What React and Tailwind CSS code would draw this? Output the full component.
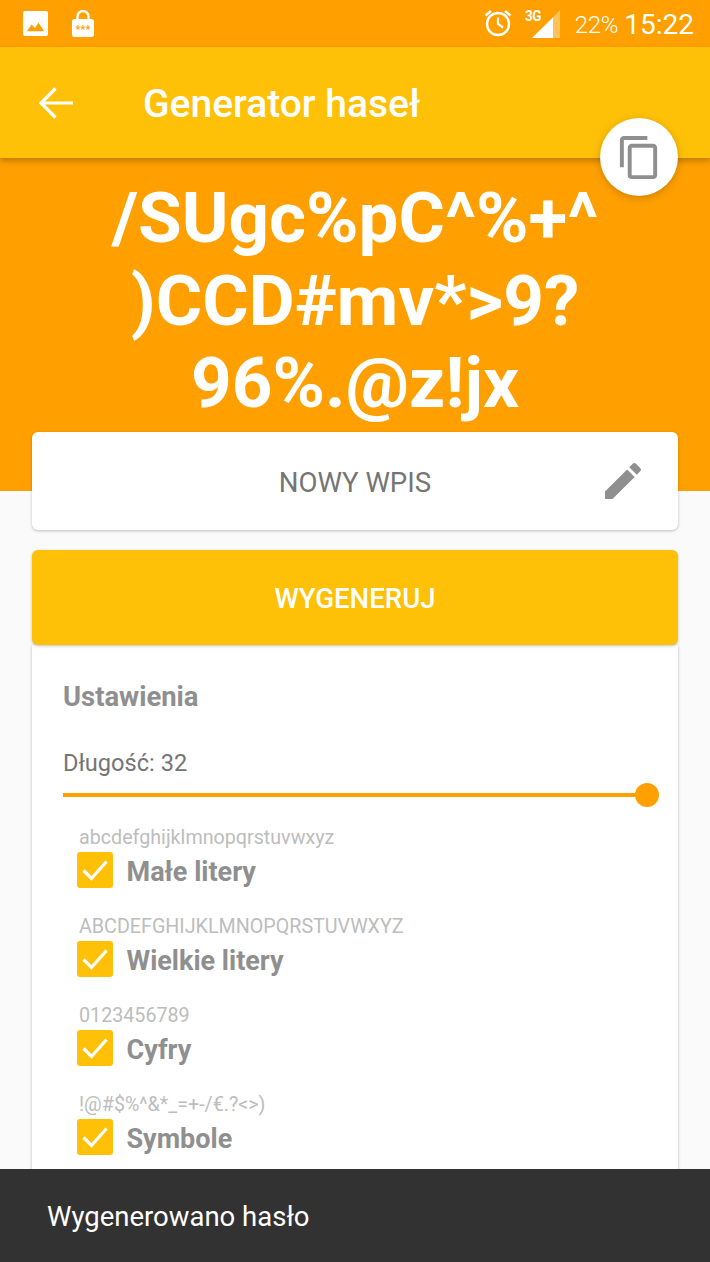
const options = [
  { sample: 'abcdefghijklmnopqrstuvwxyz', label: 'Małe litery' },
  { sample: 'ABCDEFGHIJKLMNOPQRSTUVWXYZ', label: 'Wielkie litery' },
  { sample: '0123456789', label: 'Cyfry' },
  { sample: '!@#$%^&*_=+-/€.?<>)', label: 'Symbole' },
];

const StatusBar = () => (
  <div className="h-[47px] bg-[#ffa000] flex items-center text-white">
    {/* image notification */}
    <svg className="ml-[23px] w-[25px] h-[25px] mb-[1px]" viewBox="0 0 26 26">
      <path fill="#fff" fillRule="evenodd" d="M2 0h22a2 2 0 0 1 2 2v22a2 2 0 0 1-2 2H2a2 2 0 0 1-2-2V2a2 2 0 0 1 2-2z" />
      <path fill="#ffa000" d="M4 21l5-7 3.500 4 3.500-6 6 9z" />
    </svg>
    {/* lock notification */}
    <svg className="ml-[24px] w-[22px] h-[27px]" viewBox="0 0 22 27">
      <path fill="none" stroke="#fff" strokeWidth="2.4" d="M5.500 10V6.500a5.500 5.500 0 0 1 11 0V10" />
      <rect x="0" y="9" width="22" height="18" rx="2.5" fill="#fff" />
      <text x="11" y="23" textAnchor="middle" fontSize="11" fontWeight="700" fill="#ffa000" fontFamily="Roboto, sans-serif">***</text>
    </svg>
    <div className="ml-auto flex items-center mr-[16px]">
      <svg className="w-[28px] h-[28px] mt-[-1px]" viewBox="0 0 28 28" fill="none" stroke="#fff">
        <circle cx="14" cy="15" r="11" strokeWidth="2.4" />
        <path d="M14 8.500V15l5 3.500" strokeWidth="2.2" />
        <path d="M1.500 6.500L7 2M26.500 6.500L21 2" strokeWidth="2.6" />
      </svg>
      <div className="relative w-[35px] h-[30px] ml-[13px] mt-[-2px]">
        <svg className="absolute right-0 bottom-0 w-[28px] h-[28px]" viewBox="0 0 28 28">
          <path fill="#fff" fillOpacity="0.35" d="M28 0v28H0z" />
          <path fill="#fff" d="M21 7.500V28H0z" />
        </svg>
        <span className="absolute left-0 top-0 text-[15px] leading-[16px] font-bold text-white tracking-[-0.5px] scale-x-90 origin-left">3G</span>
      </div>
      <span className="ml-[15px] mt-[2px] text-[24px] font-light tracking-[-0.3px]">22%</span>
      <span className="ml-[6px] mt-[2px] text-[28px] font-normal">15:22</span>
    </div>
  </div>
);

const App = () => {
  return (
    <div className="relative w-[710px] h-[1262px] overflow-hidden bg-[#fafafa] font-['Roboto',sans-serif]">
      <StatusBar />

      {/* Toolbar */}
      <div className="relative z-10 h-[111px] bg-[#ffc107] flex items-center shadow-[0_3px_6px_rgba(0,0,0,0.25)]">
        <svg className="ml-[39px] w-[34px] h-[32px]" viewBox="0 0 34 32" fill="none" stroke="#fff" strokeWidth="3.2">
          <path d="M2 16H34M16.500 1.500L2 16l14.500 14.500" />
        </svg>
        <h1 className="ml-[70px] mt-[4px] text-[39px] font-medium text-white">Generator haseł</h1>
        <div className="absolute right-[32px] top-[71px] w-[78px] h-[78px] rounded-full bg-white flex items-center justify-center shadow-[0_2px_8px_rgba(0,0,0,0.2)]">
          <svg className="w-[47px] h-[47px]" viewBox="0 0 24 24">
            <path fill="#8f8f8f" d="M16 1H4c-1.100 0-2 .9-2 2v14h2V3h12V1zm3 4H8c-1.100 0-2 .9-2 2v14c0 1.100.9 2 2 2h11c1.100 0 2-.9 2-2V7c0-1.100-.9-2-2-2zm0 16H8V7h11v14z" />
          </svg>
        </div>
      </div>

      {/* Generated password */}
      <div className="h-[333px] bg-[#ffa000] pt-[19px] text-center">
        <p className="text-[71px] leading-[82.5px] font-bold text-white">
          /SUgc%pC^%+^
          <br />
          )CCD#mv*&gt;9?
          <br />
          96%.@z!jx
        </p>
      </div>

      <div className="mx-[32px] mt-[-59px] relative flex flex-col">
        <div className="h-[98px] bg-white rounded-[6px] shadow-[0_1px_3px_rgba(0,0,0,0.25)] flex items-center justify-center relative">
          <span className="text-[27.6px] text-[#757575] mt-[3px]">NOWY WPIS</span>
          <svg className="absolute right-[31px] top-[25px] w-[48px] h-[48px]" viewBox="0 0 24 24">
            <path fill="#8f8f8f" d="M3 17.250V21h3.750L17.810 9.940l-3.750-3.750L3 17.250zM20.710 7.040a1 1 0 0 0 0-1.410l-2.340-2.340a1 1 0 0 0-1.410 0l-1.830 1.830 3.750 3.750 1.830-1.830z" />
          </svg>
        </div>

        <div className="mt-[20px] h-[95px] relative z-10 bg-[#ffc107] rounded-[6px] shadow-[0_1px_3px_rgba(0,0,0,0.25)] flex items-center justify-center">
          <span className="text-[27.6px] font-medium text-white mt-[3px]">WYGENERUJ</span>
        </div>

        <div className="bg-white shadow-[0_1px_3px_rgba(0,0,0,0.25)] pt-[36px] px-[31px] h-[560px]">
          <h2 className="text-[27.4px] leading-[32px] font-bold text-[#8f8f8f]">Ustawienia</h2>
          <p className="mt-[35px] text-[23.6px] leading-[30px] text-[#757575]">Długość: 32</p>

          {/* Length slider */}
          <div className="relative mt-[15px] h-[4px] bg-[#ffa000]">
            <div className="absolute right-[-12px] top-[-10px] w-[24px] h-[24px] rounded-full bg-[#ffa000]" />
          </div>

          <div className="mt-[30px] ml-[14px] flex flex-col gap-[28px]">
            {options.map((option) => (
              <div key={option.label}>
                <p className="ml-[2px] text-[19.7px] leading-[22px] text-[#bdbdbd]">{option.sample}</p>
                <div className="mt-[3px] flex items-center">
                  <div className="w-[36px] h-[36px] rounded-[3px] bg-[#ffc107] flex items-center justify-center">
                    <svg className="w-[28px] h-[26px]" viewBox="0 0 28 26" fill="none" stroke="#fff" strokeWidth="3.2">
                      <path d="M2.500 13.500l8 8L25.500 4.500" />
                    </svg>
                  </div>
                  <span className="ml-[13.5px] mt-[3px] text-[27px] leading-[32px] font-bold text-[#8f8f8f]">{option.label}</span>
                </div>
              </div>
            ))}
          </div>
        </div>
      </div>

      {/* Snackbar */}
      <div className="absolute left-0 right-0 bottom-0 h-[93px] bg-[#323232] flex items-center pl-[47px]">
        <span className="text-[27.5px] text-white mt-[3px]">Wygenerowano hasło</span>
      </div>
    </div>
  );
};

export default App;
